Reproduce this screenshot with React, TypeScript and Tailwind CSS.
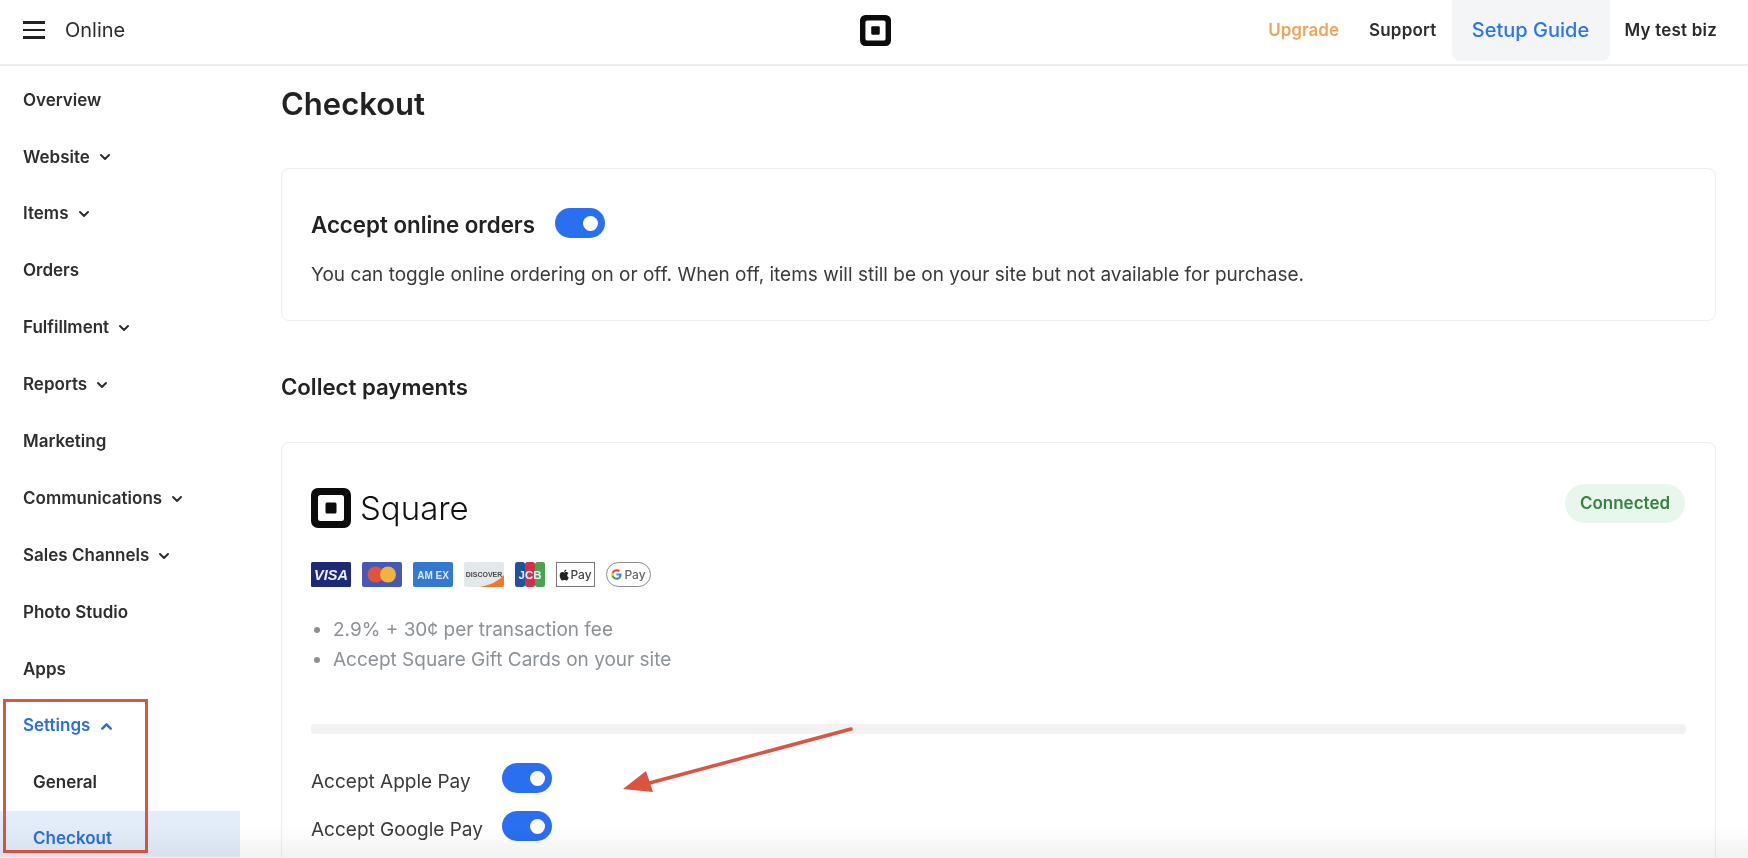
import React from "react";
import { ChevronDown, ChevronUp } from "lucide-react";

const Mark = ({ size }: { size: number }) => (
  <svg width={size} height={size} viewBox="0 0 40 40" className="block shrink-0">
    <path fillRule="evenodd" fill="#0b0b0b" d="M7 0h26a7 7 0 0 1 7 7v26a7 7 0 0 1-7 7H7a7 7 0 0 1-7-7V7a7 7 0 0 1 7-7zM9.500 7A2.500 2.500 0 0 0 7 9.500v21A2.500 2.500 0 0 0 9.500 33h21a2.500 2.500 0 0 0 2.500-2.500v-21A2.500 2.500 0 0 0 30.500 7z" />
    <rect x="14.500" y="14.500" width="11" height="11" rx="1.500" fill="#0b0b0b" />
  </svg>
);

const Toggle = () => (
  <span className="flex h-[30px] w-[50px] shrink-0 items-center justify-end rounded-full bg-[#2a6ff0] pr-[7px]">
    <span className="h-[15px] w-[15px] rounded-full bg-white" />
  </span>
);

const nav: [string, "down" | "none"][] = [
  ["Overview", "none"],
  ["Website", "down"],
  ["Items", "down"],
  ["Orders", "none"],
  ["Fulfillment", "down"],
  ["Reports", "down"],
  ["Marketing", "none"],
  ["Communications", "down"],
  ["Sales Channels", "down"],
  ["Photo Studio", "none"],
  ["Apps", "none"],
];

const Cards = () => (
  <div className="flex items-center gap-[11px]">
    <svg width="40" height="25" viewBox="0 0 40 25"><rect width="40" height="25" rx="1.500" fill="#1c2a78" /><text x="20" y="18" textAnchor="middle" fontFamily="Liberation Sans" fontSize="14.500" fontWeight="700" fontStyle="italic" fill="#eef0f8">VISA</text></svg>
    <svg width="40" height="25" viewBox="0 0 40 25"><rect width="40" height="25" rx="2" fill="#4558b5" /><circle cx="13.500" cy="12.500" r="8" fill="#e0533c" /><circle cx="26" cy="12.500" r="8" fill="#f2b33d" /></svg>
    <svg width="40" height="25" viewBox="0 0 40 25"><rect width="40" height="25" rx="2" fill="#3478d0" /><text x="20" y="16.500" textAnchor="middle" fontFamily="Liberation Sans" fontSize="10" fontWeight="700" fill="#dbe8fa">AM EX</text></svg>
    <svg width="40" height="25" viewBox="0 0 40 25"><rect width="40" height="25" rx="2" fill="#e3e8ea" /><path d="M16 25Q32 22 40 13V23a2 2 0 0 1-2 2z" fill="#ec7a2f" /><text x="20" y="15" textAnchor="middle" fontFamily="Liberation Sans" fontSize="7" fontWeight="700" fill="#4a4a4a">DISCOVER</text></svg>
    <svg width="30" height="25" viewBox="0 0 30 25"><rect x="0" width="10" height="25" rx="2.500" fill="#20539c" /><rect x="10" width="10" height="25" rx="2.500" fill="#c9344a" /><rect x="20" width="10" height="25" rx="2.500" fill="#4aa34f" /><text x="15" y="17" textAnchor="middle" fontFamily="Liberation Sans" fontSize="11.500" fontWeight="700" fill="#e9eef5">JCB</text></svg>
    <span className="flex h-[25px] w-[39px] items-center justify-center gap-[1px] border border-[#77797c] font-['Inter',sans-serif] text-[12px] font-medium text-[#444]">
      <svg width="10" height="12" viewBox="0 0 24 28"><path fill="#222" d="M19.700 14.800c0-3.400 2.800-5 2.900-5.100-1.600-2.300-4-2.600-4.900-2.700-2.100-.2-4.100 1.200-5.100 1.200-1.100 0-2.700-1.200-4.400-1.200-2.300 0-4.400 1.300-5.500 3.300-2.400 4.100-.6 10.200 1.700 13.600 1.100 1.600 2.500 3.400 4.200 3.400 1.700-.1 2.300-1.100 4.400-1.100 2 0 2.600 1.100 4.400 1 1.800 0 3-1.600 4.100-3.300 1.300-1.900 1.800-3.700 1.800-3.800-.1 0-3.600-1.400-3.600-5.300zM16.300 4.700c.9-1.100 1.500-2.700 1.400-4.200-1.300.1-2.900.9-3.900 2-.8 1-1.600 2.600-1.400 4.100 1.500.1 3-.8 3.900-1.900z" /></svg>
      Pay
    </span>
    <span className="flex h-[25px] w-[45px] items-center justify-center gap-[2px] rounded-full border border-[#8a8c8e] font-['Inter',sans-serif] text-[12px] font-medium text-[#666]">
      <svg width="11" height="11" viewBox="0 0 24 24"><path fill="#4285f4" d="M23 12.300c0-.8-.1-1.600-.2-2.300H12v4.400h6.200c-.3 1.400-1.100 2.600-2.300 3.400v2.800h3.700c2.100-2 3.400-4.900 3.400-8.300z" /><path fill="#34a853" d="M12 23.500c3.100 0 5.700-1 7.600-2.800l-3.700-2.900c-1 .7-2.300 1.100-3.900 1.100-3 0-5.500-2-6.400-4.700H1.800v2.900C3.700 20.900 7.600 23.500 12 23.500z" /><path fill="#fbbc05" d="M5.600 14.200c-.5-1.400-.5-3 0-4.400V6.900H1.800c-1.600 3.200-1.600 7 0 10.200z" /><path fill="#ea4335" d="M12 5.100c1.700 0 3.200.6 4.400 1.700l3.300-3.300C17.700 1.600 15.100.5 12 .5 7.600.5 3.700 3.100 1.800 6.900l3.800 2.900C6.500 7.100 9 5.100 12 5.100z" /></svg>
      Pay
    </span>
  </div>
);

export default function App() {
  return (
    <div className="relative flex h-[858px] w-[1748px] flex-col overflow-hidden bg-white font-['Inter',sans-serif] text-[#252525]">
      <header className="flex h-[66px] shrink-0 items-start border-b-2 border-[#ececee] bg-white">
        <div className="flex h-[60px] w-[600px] items-center pl-[23px]">
          <span className="flex w-[22px] flex-col gap-[5px]">
            <span className="h-[2.500px] bg-[#222]" />
            <span className="h-[2.500px] bg-[#222]" />
            <span className="h-[2.500px] bg-[#222]" />
          </span>
          <span className="ml-[20px] text-[20px] leading-none text-[#2c2c2c]">Online</span>
        </div>
        <div className="flex h-[61px] flex-1 items-center justify-center">
          <div className="mr-[118px]"><Mark size={31} /></div>
        </div>
        <div className="flex h-[60px] items-center pr-[31px] text-[17px] font-semibold leading-none tracking-[0.2px]">
          <span className="tracking-normal text-[#eda55c]">Upgrade</span>
          <span className="ml-[30px] text-[#2f2f2f]">Support</span>
          <span className="ml-[15px] flex h-[61px] w-[158px] items-center justify-center rounded-b-lg bg-[#f3f5f7] text-[20px] font-medium tracking-normal text-[#2a74f0]">Setup Guide</span>
          <span className="ml-[15px] text-[#2a2a2a]">My test biz</span>
        </div>
      </header>

      <div className="flex min-h-0 flex-1">
        <nav className="flex w-[240px] shrink-0 flex-col pt-[6px] text-[17px] font-semibold">
          {nav.map(([label, kind]) => (
            <div key={label} className="flex h-[56.900px] shrink-0 items-center gap-[7px] pl-[23px] text-[#2e2e2e]">
              {label}
              {kind === "down" && <ChevronDown size={16} strokeWidth={3} />}
            </div>
          ))}
          <div className="flex h-[56.900px] shrink-0 items-center gap-[8px] pl-[23px] text-[#2a6fdc]">
            Settings <ChevronUp size={17} strokeWidth={3.500} />
          </div>
          <div className="flex h-[56px] shrink-0 items-center pl-[33px] text-[#2e2e2e]">General</div>
          <div className="flex h-[57px] shrink-0 items-center bg-[#e3edfa] pl-[33px] text-[#2a6fdc]">Checkout</div>
        </nav>

        <main className="flex min-w-0 flex-1 flex-col pl-[41px] pr-[32px]">
          <h1 className="mt-[20px] text-[31px] font-semibold leading-[36px] text-[#222]">Checkout</h1>

          <section className="mt-[46px] h-[153px] shrink-0 rounded-lg border border-[#efefef] px-[29px] pt-[39px]">
            <div className="flex items-center gap-[20px]">
              <h2 className="relative top-[2px] text-[22.300px] font-semibold leading-none text-[#222]">Accept online orders</h2>
              <Toggle />
            </div>
            <p className="mt-[25px] text-[19px] leading-[24px] text-[#3a3a3a]">You can toggle online ordering on or off. When off, items will still be on your site but not available for purchase.</p>
          </section>

          <h2 className="mt-[53px] text-[22.200px] font-semibold leading-[26px] text-[#222]">Collect payments</h2>

          <section className="mt-[42px] min-h-0 flex-1 rounded-t-lg border border-[#efefef] px-[29px] pt-[45px]">
            <div className="flex items-start justify-between">
              <div className="flex items-center gap-[9px]">
                <Mark size={40} />
                <span className="text-[33px] font-light leading-none text-[#111]">Square</span>
              </div>
              <span className="-mt-[4px] mr-[1px] flex h-[39px] w-[120px] items-center justify-center rounded-full bg-[#e8f7ec] text-[17px] font-semibold text-[#39813f]">Connected</span>
            </div>
            <div className="mt-[34px]"><Cards /></div>
            <ul className="mt-[28px] list-disc pl-[22px] text-[19px] leading-[30px] text-[#8c9196] marker:text-[#8c9196]">
              <li>2.9% + 30¢ per transaction fee</li>
              <li>Accept Square Gift Cards on your site</li>
            </ul>
            <div className="mt-[49px] h-[10px] rounded-sm bg-[#f2f2f2]" />
            <div className="mt-[29px] flex items-center">
              <span className="relative top-[4px] w-[191px] text-[19px] leading-[30px] text-[#3a3a3a]">Accept Apple Pay</span>
              <Toggle />
            </div>
            <div className="mt-[18px] flex items-center">
              <span className="relative top-[4px] w-[191px] text-[19px] leading-[30px] text-[#3a3a3a]">Accept Google Pay</span>
              <Toggle />
            </div>
          </section>
        </main>
      </div>

      <div className="pointer-events-none absolute left-[3px] top-[699px] h-[154px] w-[145px] border-[3px] border-[#df5441]" />
      <svg className="pointer-events-none absolute left-[620px] top-[725px]" width="240" height="70" viewBox="0 0 240 70">
        <line x1="231" y1="4" x2="22" y2="60" stroke="#dc5340" strokeWidth="3.500" strokeLinecap="round" />
        <polygon points="3,64 26,46 33,67" fill="#dc5340" />
      </svg>
      <div className="pointer-events-none absolute inset-x-0 bottom-0 h-[33px] bg-gradient-to-b from-white to-[#f2f2f2] mix-blend-multiply" />
      <div className="pointer-events-none absolute inset-x-0 bottom-0 h-[1px] bg-[#f4f6e6]" />
    </div>
  );
}
